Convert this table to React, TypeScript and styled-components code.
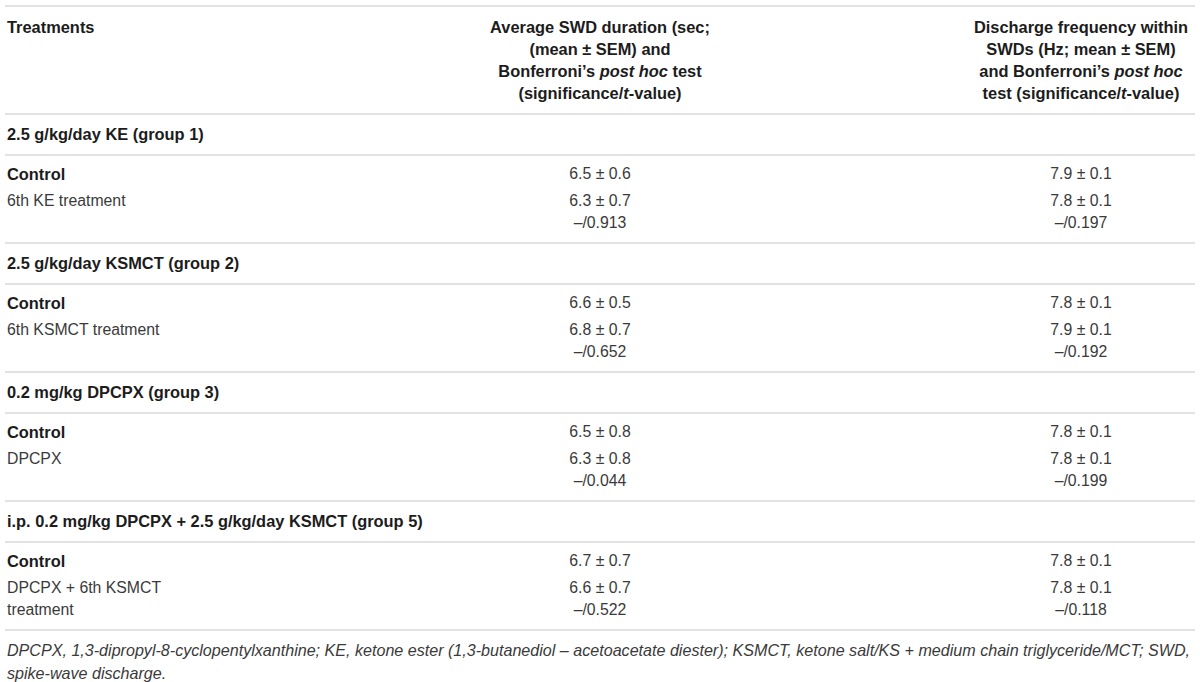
import styled, { createGlobalStyle } from 'styled-components'

const GlobalStyle = createGlobalStyle`
  body {
    margin: 0;
    background: #ffffff;
    font-family: "Liberation Sans", Arial, sans-serif;
    color: #222222;
  }
`

const columns = '473px 240px 1fr 228px'

const Page = styled.div`
  width: 1190px;
  padding: 5px 5px 0 5px;
`

const HeaderRow = styled.div`
  display: grid;
  grid-template-columns: ${columns};
  border-top: 2px solid #e2e2e2;
  padding: 9px 0 9px 2px;
  font-size: 16.4px;
  line-height: 22px;
  font-weight: bold;
  color: #1c1c1c;
`

const HeaderCell = styled.div<{ $col: number; $center?: boolean }>`
  grid-column: ${(p) => p.$col};
  text-align: ${(p) => (p.$center ? 'center' : 'left')};
  white-space: nowrap;
`

const GroupRow = styled.div`
  border-top: 2px solid #e2e2e2;
  padding: 8px 0 9px 2px;
  font-size: 16.4px;
  line-height: 22px;
  font-weight: bold;
  color: #1c1c1c;
`

const Block = styled.div`
  display: grid;
  grid-template-columns: ${columns};
  row-gap: 5px;
  border-top: 2px solid #e2e2e2;
  padding: 7px 0 9px 2px;
  font-size: 15.8px;
  line-height: 21.5px;
`

const Label = styled.div<{ $bold?: boolean }>`
  grid-column: 1;
  font-weight: ${(p) => (p.$bold ? 'bold' : 'normal')};
  font-size: ${(p) => (p.$bold ? '16.4px' : '15.8px')};
  color: ${(p) => (p.$bold ? '#1c1c1c' : '#3a3a3a')};
  line-height: ${(p) => (p.$bold ? '22px' : '21.5px')};
`

const Value = styled.div<{ $col: number }>`
  grid-column: ${(p) => p.$col};
  text-align: center;
  color: #3a3a3a;
  white-space: nowrap;
`

const Footnote = styled.div`
  border-top: 2px solid #e2e2e2;
  padding: 8px 0 0 2px;
  font-size: 16.1px;
  line-height: 23px;
  font-style: italic;
  color: #3a3a3a;
  white-space: nowrap;
`

const pm = ' \u00b1 '

interface Group {
  title: string
  treatment: string[]
  control: [string, string]
  treated: [string, string]
  t: [string, string]
}

const groups: Group[] = [
  {
    title: '2.5 g/kg/day KE (group 1)',
    treatment: ['6th KE treatment'],
    control: ['6.5' + pm + '0.6', '7.9' + pm + '0.1'],
    treated: ['6.3' + pm + '0.7', '7.8' + pm + '0.1'],
    t: ['\u2013/0.913', '\u2013/0.197'],
  },
  {
    title: '2.5 g/kg/day KSMCT (group 2)',
    treatment: ['6th KSMCT treatment'],
    control: ['6.6' + pm + '0.5', '7.8' + pm + '0.1'],
    treated: ['6.8' + pm + '0.7', '7.9' + pm + '0.1'],
    t: ['\u2013/0.652', '\u2013/0.192'],
  },
  {
    title: '0.2 mg/kg DPCPX (group 3)',
    treatment: ['DPCPX'],
    control: ['6.5' + pm + '0.8', '7.8' + pm + '0.1'],
    treated: ['6.3' + pm + '0.8', '7.8' + pm + '0.1'],
    t: ['\u2013/0.044', '\u2013/0.199'],
  },
  {
    title: 'i.p. 0.2 mg/kg DPCPX + 2.5 g/kg/day KSMCT (group 5)',
    treatment: ['DPCPX + 6th KSMCT', 'treatment'],
    control: ['6.7' + pm + '0.7', '7.8' + pm + '0.1'],
    treated: ['6.6' + pm + '0.7', '7.8' + pm + '0.1'],
    t: ['\u2013/0.522', '\u2013/0.118'],
  },
]

export default function App() {
  return (
    <Page>
      <GlobalStyle />
      <HeaderRow>
        <HeaderCell $col={1}>Treatments</HeaderCell>
        <HeaderCell $col={2} $center>
          Average SWD duration (sec;
          <br />
          (mean ± SEM) and
          <br />
          Bonferroni’s <i>post hoc</i> test
          <br />
          (significance/<i>t</i>-value)
        </HeaderCell>
        <HeaderCell $col={4} $center>
          Discharge frequency within
          <br />
          SWDs (Hz; mean ± SEM)
          <br />
          and Bonferroni’s <i>post hoc</i>
          <br />
          test (significance/<i>t</i>-value)
        </HeaderCell>
      </HeaderRow>
      {groups.map((g) => (
        <div key={g.title}>
          <GroupRow>{g.title}</GroupRow>
          <Block>
            <Label $bold>Control</Label>
            <Value $col={2}>{g.control[0]}</Value>
            <Value $col={4}>{g.control[1]}</Value>
            <Label>
              {g.treatment.map((line) => (
                <div key={line}>{line}</div>
              ))}
            </Label>
            <Value $col={2}>
              {g.treated[0]}
              <br />
              {g.t[0]}
            </Value>
            <Value $col={4}>
              {g.treated[1]}
              <br />
              {g.t[1]}
            </Value>
          </Block>
        </div>
      ))}
      <Footnote>
        DPCPX, 1,3-dipropyl-8-cyclopentylxanthine; KE, ketone ester (1,3-butanediol – acetoacetate
        diester); KSMCT, ketone salt/KS + medium chain triglyceride/MCT; SWD,
        <br />
        spike-wave discharge.
      </Footnote>
    </Page>
  )
}
